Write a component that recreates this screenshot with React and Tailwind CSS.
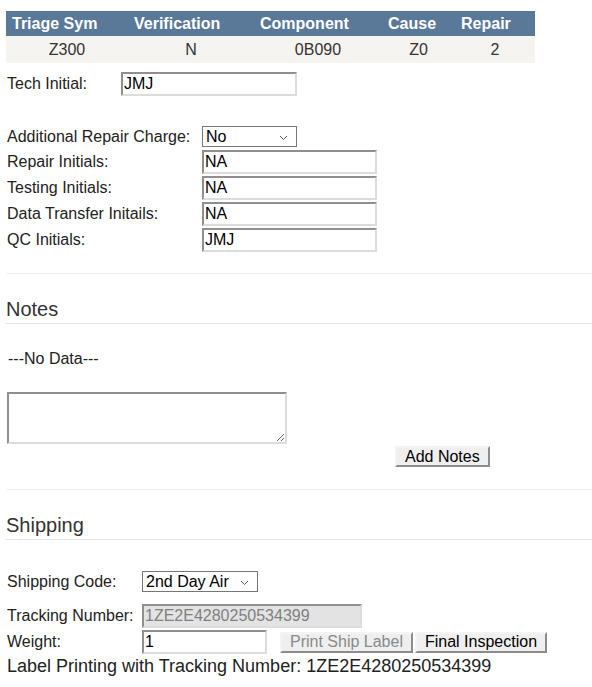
import React from 'react';

const cols = [
  { head: 'Triage Sym', val: 'Z300', w: 'w-[122px]' },
  { head: 'Verification', val: 'N', w: 'w-[126px]' },
  { head: 'Component', val: '0B090', w: 'w-[128px]' },
  { head: 'Cause', val: 'Z0', w: 'w-[73px]' },
  { head: 'Repair', val: '2', w: 'w-[80px]' },
];

const inset = 'border-2 border-t-[#8f8f8f] border-l-[#8f8f8f] border-r-[#dcdcdc] border-b-[#dcdcdc] bg-white px-[1px] text-[16px] text-black outline-none';
const btn = 'h-[21px] border-2 border-t-[#f4f4f4] border-l-[#f4f4f4] border-r-[#8c8c8c] border-b-[#8c8c8c] bg-[#efefef] px-[8px] text-[16px] leading-none';

function Chevron() {
  return (
    <svg width="9" height="6" viewBox="0 0 9 6" className="absolute right-[8px] top-[8px]">
      <path d="M1 1l3.5 3.5L8 1" fill="none" stroke="#555" strokeWidth="1" />
    </svg>
  );
}

function Select({ value, w }) {
  return (
    <div className={`relative h-[21px] ${w} border border-[#767676] bg-white pl-[3px] text-[16px] leading-[19px] text-black`}>
      {value}
      <Chevron />
    </div>
  );
}

function Row({ label, lw, children, className = '' }) {
  return (
    <div className={`flex items-center ${className}`}>
      <div className={`${lw} pl-[1px]`}>{label}</div>
      {children}
    </div>
  );
}

export default function App() {
  return (
    <div className="min-h-[687px] bg-white pl-[6px] text-[16px] leading-[18px] text-[#222]" style={{ fontFamily: '"Liberation Sans", Arial, sans-serif' }}>
      <div className="pt-[11px]">
        <table className="border-collapse">
          <thead>
            <tr className="h-[25px] bg-[#5a7897] text-white">
              {cols.map((c) => (
                <th key={c.head} className={`${c.w} p-0 pl-[6px] text-left font-bold`}>{c.head}</th>
              ))}
            </tr>
          </thead>
          <tbody>
            <tr className="h-[27px] bg-[#f6f4f0] text-[#333]">
              {cols.map((c) => (
                <td key={c.head} className="p-0 text-center">{c.val}</td>
              ))}
            </tr>
          </tbody>
        </table>
      </div>

      <Row label="Tech Initial:" lw="w-[115px]" className="mt-[9px]">
        <input readOnly value="JMJ" className={`${inset} h-[24px] w-[176px]`} />
      </Row>

      <Row label="Additional Repair Charge:" lw="w-[196px]" className="mt-[30px]">
        <Select value="No" w="w-[95px]" />
      </Row>
      <div className="mt-[3px] flex flex-col gap-[2px]">
        {[
          ['Repair Initials:', 'NA'],
          ['Testing Initials:', 'NA'],
          ['Data Transfer Initails:', 'NA'],
          ['QC Initials:', 'JMJ'],
        ].map(([l, v]) => (
          <Row key={l} label={l} lw="w-[196px]">
            <input readOnly value={v} className={`${inset} h-[24px] w-[175px]`} />
          </Row>
        ))}
      </div>

      <div className="mt-[21px] h-[1px] bg-[#eeeeee]" />

      <div className="mt-[23px] border-b border-[#e5e5e5] pb-[2px] text-[20px] leading-[24px] text-[#333]">Notes</div>

      <div className="mt-[26px] pl-[2px]">---No Data---</div>

      <textarea readOnly className={`${inset} mt-[24px] ml-[1px] block h-[52px] w-[280px] resize`} />

      <div className="mt-[2px] pl-[389px]">
        <button className={`${btn} text-black`}>Add Notes</button>
      </div>

      <div className="mt-[22px] h-[1px] bg-[#eeeeee]" />

      <div className="mt-[23px] border-b border-[#e5e5e5] pb-[2px] text-[20px] leading-[24px] text-[#333]">Shipping</div>

      <Row label="Shipping Code:" lw="w-[136px]" className="mt-[31px]">
        <Select value="2nd Day Air" w="w-[116px]" />
      </Row>

      <Row label="Tracking Number:" lw="w-[136px]" className="mt-[12px]">
        <input readOnly value="1ZE2E4280250534399" className={`${inset} h-[24px] w-[220px] !bg-[#e3e3e3] !text-[#808080]`} />
      </Row>

      <Row label="Weight:" lw="w-[136px]" className="mt-[2px]">
        <input readOnly value="1" className={`${inset} h-[24px] w-[125px]`} />
        <button className={`${btn} ml-[13px] text-[#8a8a8a]`}>Print Ship Label</button>
        <button className={`${btn} ml-[2px] text-black`}>Final Inspection</button>
      </Row>

      <div className="mt-[2px] pl-[1px] text-[18px] leading-[20px]">Label Printing with Tracking Number: 1ZE2E4280250534399</div>
    </div>
  );
}
